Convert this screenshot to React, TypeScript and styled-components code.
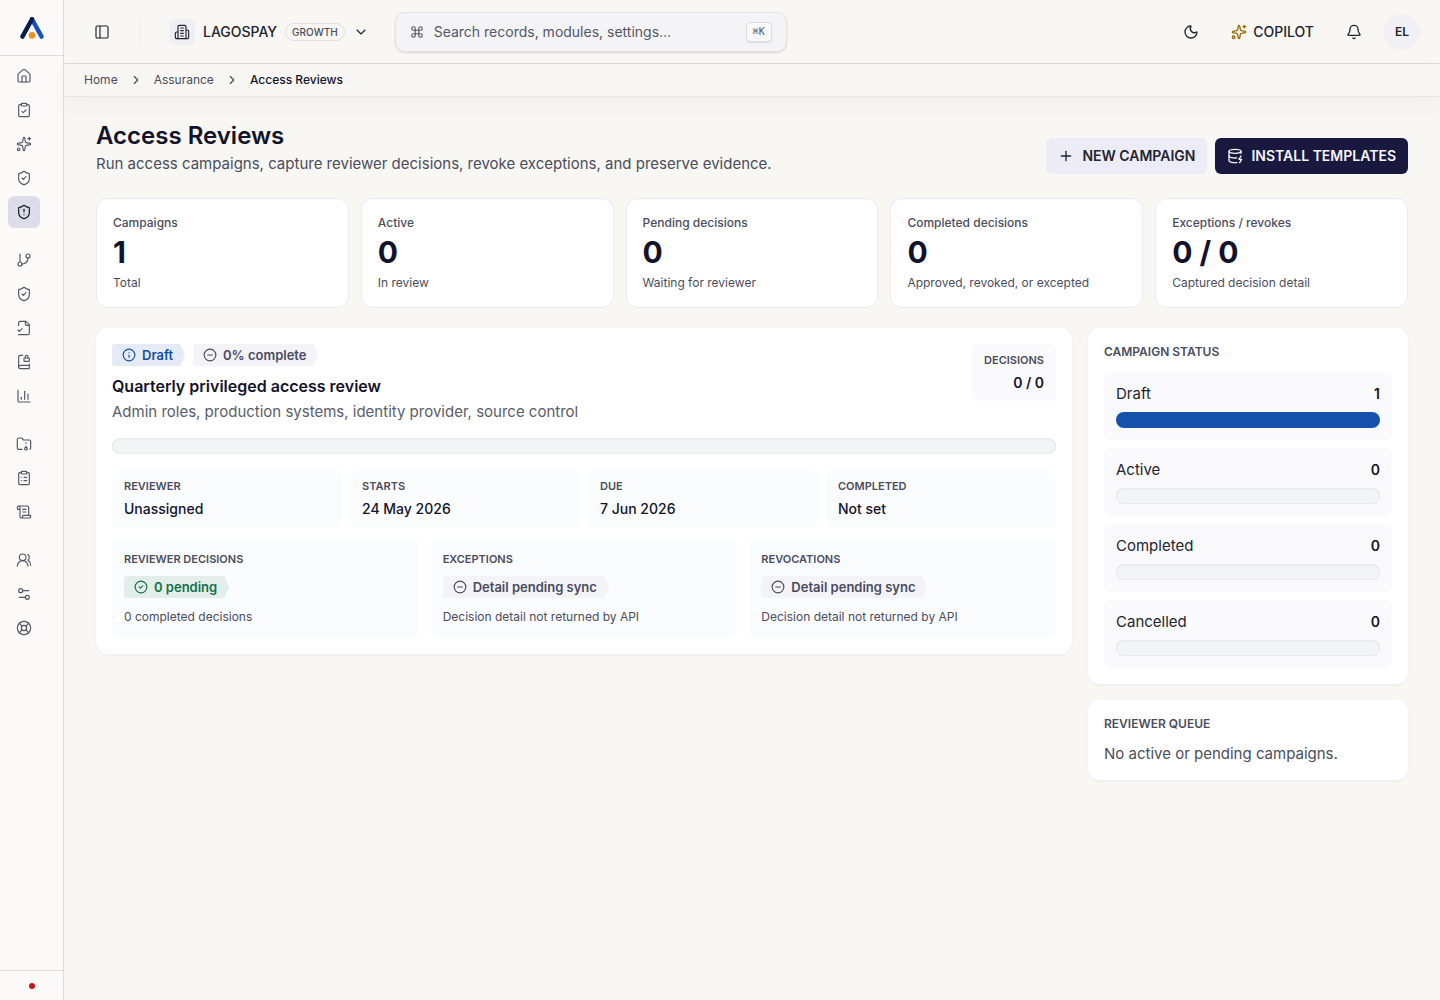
import React from "react";
import styled, { createGlobalStyle, css } from "styled-components";
import {
  Bell,
  BookLock,
  ChartColumn,
  ChevronDown,
  ChevronRight,
  CircleCheck,
  CircleMinus,
  ClipboardCheck,
  ClipboardList,
  Command,
  DatabaseZap,
  FolderArchive,
  House,
  Info,
  LifeBuoy,
  Moon,
  PanelLeft,
  Plus,
  ScrollText,
  Settings2,
  ShieldAlert,
  ShieldCheck,
  Sparkles,
  UsersRound,
} from "lucide-react";

const color = {
  page: "#f8f7f3",
  rail: "#fbfaf8",
  line: "#dddde1",
  ink: "#12132a",
  text: "#23242f",
  muted: "#4b4d5b",
  soft: "#eeeef5",
  navy: "#19193f",
  blue: "#1452ab",
};

const GlobalStyle = createGlobalStyle`
  *, *::before, *::after { box-sizing: border-box; }
  body {
    margin: 0;
    background: ${color.page};
    color: ${color.text};
    font-family: Inter, "Liberation Sans", sans-serif;
    font-size: 14px;
    line-height: 20px;
  }
  button, input { font: inherit; color: inherit; }
  h1, h2, h3, p, dl, dd, dt, ol, ul { margin: 0; padding: 0; }
  ol, ul { list-style: none; }
  svg { display: block; flex: none; }
`;

const Shell = styled.div`
  display: flex;
  min-height: 100vh;
`;

const Rail = styled.aside`
  display: flex;
  flex-direction: column;
  flex: none;
  width: 64px;
  background: ${color.rail};
  border-right: 1px solid ${color.line};
`;

const Brand = styled.a`
  display: flex;
  align-items: center;
  justify-content: center;
  height: 56px;
  border-bottom: 1px solid ${color.line};
`;

const RailNav = styled.nav`
  display: flex;
  flex-direction: column;
  flex: 1;
  gap: 16px;
  padding: 4px 8px;
`;

const RailGroup = styled.ul`
  display: flex;
  flex-direction: column;
  gap: 2px;
`;

const RailLink = styled.a<{ $active?: boolean }>`
  display: flex;
  align-items: center;
  justify-content: center;
  width: 32px;
  height: 32px;
  border-radius: 6px;
  color: ${(p) => (p.$active ? color.ink : "#555766")};
  background: ${(p) => (p.$active ? "#dcdde9" : "transparent")};
`;

const RailFoot = styled.div`
  display: flex;
  align-items: center;
  justify-content: center;
  height: 30px;
  border-top: 1px solid ${color.line};
`;

const StatusDot = styled.span`
  width: 6px;
  height: 6px;
  border-radius: 50%;
  background: #c4161c;
`;

const Body = styled.div`
  display: flex;
  flex-direction: column;
  flex: 1;
  min-width: 0;
`;

const TopBar = styled.header`
  display: flex;
  align-items: center;
  justify-content: space-between;
  height: 64px;
  padding: 0 20px;
  border-bottom: 1px solid ${color.line};
`;

const TopSide = styled.div`
  display: flex;
  align-items: center;
`;

const IconButton = styled.button`
  display: flex;
  align-items: center;
  justify-content: center;
  width: 36px;
  height: 36px;
  padding: 0;
  border: 0;
  background: none;
  cursor: pointer;
`;

const Divider = styled.span`
  width: 1px;
  height: 28px;
  margin: 0 20px;
  background: #ececec;
`;

const OrgButton = styled.button`
  display: flex;
  align-items: center;
  gap: 8px;
  height: 36px;
  padding: 0 8px;
  border: 0;
  background: none;
  font-size: 14px;
  font-weight: 500;
  cursor: pointer;
`;

const OrgMark = styled.span`
  display: flex;
  align-items: center;
  justify-content: center;
  width: 26px;
  height: 26px;
  border-radius: 6px;
  background: ${color.soft};
`;

const Plan = styled.span`
  padding: 0 6px;
  border: 1px solid #dfdfe4;
  border-radius: 9px;
  color: ${color.muted};
  font-size: 10px;
  line-height: 16px;
`;

const Search = styled.label`
  display: flex;
  align-items: center;
  gap: 10px;
  width: 392px;
  height: 40px;
  margin-left: 18px;
  padding: 0 14px;
  border: 1px solid #e3e3e6;
  border-radius: 10px;
  background: #f4f4f6;
  box-shadow: 0 1px 2px rgba(20, 20, 50, 0.14);
  color: #555766;
`;

const SearchInput = styled.input`
  flex: 1;
  min-width: 0;
  padding: 0;
  border: 0;
  outline: 0;
  background: none;
  font-size: 14px;
  &::placeholder { color: #555766; opacity: 1; }
`;

const Key = styled.kbd`
  padding: 0 6px;
  border: 1px solid #dcdce0;
  border-radius: 4px;
  background: #fafafa;
  box-shadow: 0 1px 1px rgba(20, 20, 50, 0.1);
  font-family: "DejaVu Sans Mono", monospace;
  font-size: 10px;
  line-height: 18px;
`;

const Copilot = styled.button`
  display: flex;
  align-items: center;
  gap: 6px;
  height: 36px;
  margin: 0 10px;
  padding: 0 12px;
  border: 0;
  background: none;
  font-size: 14px;
  font-weight: 500;
  cursor: pointer;
  svg { color: #9a6b0c; }
`;

const Avatar = styled.button`
  width: 36px;
  height: 36px;
  margin-left: 12px;
  padding: 0;
  border: 0;
  border-radius: 50%;
  background: #f0f0f5;
  font-size: 12px;
  font-weight: 600;
  cursor: pointer;
`;

const Crumbs = styled.nav`
  height: 33px;
  padding: 0 20px;
  border-bottom: 1px solid #e6e6e6;
  box-shadow: 0 8px 24px rgba(20, 20, 50, 0.04);
`;

const CrumbList = styled.ol`
  display: flex;
  align-items: center;
  height: 32px;
  color: ${color.muted};
  font-size: 12px;
  line-height: 16px;
`;

const Crumb = styled.li`
  display: flex;
  align-items: center;
  svg { margin: 0 11px; }
`;

const CrumbLink = styled.a`
  color: inherit;
  text-decoration: none;
`;

const CrumbHere = styled.span`
  color: ${color.ink};
  font-weight: 500;
`;

const Main = styled.main`
  display: flex;
  flex-direction: column;
  padding: 24px 32px;
`;

const PageHead = styled.div`
  display: flex;
  align-items: flex-end;
  justify-content: space-between;
  gap: 16px;
`;

const Title = styled.h1`
  color: ${color.ink};
  font-size: 24px;
  font-weight: 600;
  line-height: 29px;
`;

const Lead = styled.p`
  margin-top: 4px;
  color: ${color.muted};
  font-size: 15px;
  line-height: 20px;
`;

const Actions = styled.div`
  display: flex;
  gap: 8px;
`;

const Action = styled.button<{ $primary?: boolean }>`
  display: flex;
  align-items: center;
  gap: 8px;
  height: 36px;
  padding: 0 12px;
  border: 0;
  border-radius: 6px;
  background: ${(p) => (p.$primary ? color.navy : "#ebecf5")};
  color: ${(p) => (p.$primary ? "#f6f6fb" : color.text)};
  font-size: 14px;
  font-weight: 600;
  white-space: nowrap;
  cursor: pointer;
`;

const Stats = styled.dl`
  display: grid;
  grid-template-columns: repeat(5, minmax(0, 1fr));
  gap: 12px;
  margin-top: 24px;
`;

const Stat = styled.div`
  padding: 16px;
  border: 1px solid #ebebee;
  border-radius: 12px;
  background: #fff;
`;

const StatLabel = styled.dt`
  color: ${color.muted};
  font-size: 12px;
  font-weight: 500;
  line-height: 16px;
`;

const StatValue = styled.dd`
  margin: 3px 0 5px;
  color: ${color.ink};
  font-size: 30px;
  font-weight: 700;
  line-height: 36px;
`;

const StatNote = styled.dd`
  color: ${color.muted};
  font-size: 12px;
  line-height: 16px;
`;

const Columns = styled.div`
  display: grid;
  grid-template-columns: minmax(0, 1fr) 320px;
  align-items: start;
  gap: 16px;
  margin-top: 20px;
`;

const Side = styled.div`
  display: flex;
  flex-direction: column;
  gap: 16px;
`;

const Card = styled.section`
  padding: 16px;
  border-radius: 12px;
  background: #fff;
  box-shadow: 0 1px 3px rgba(20, 20, 50, 0.05);
`;

const CampaignHead = styled.div`
  display: flex;
  align-items: flex-start;
  justify-content: space-between;
`;

const Badges = styled.div`
  display: flex;
  gap: 8px;
`;

type Tone = "info" | "neutral" | "good";
const tones = {
  info: css`background: #e5ebf6; color: #14509f;`,
  neutral: css`background: #f3f3f8; color: #4a4b5e;`,
  good: css`background: #e3eeea; color: #12704a;`,
};

const BadgeBox = styled.span<{ $tone: Tone }>`
  display: inline-flex;
  align-items: center;
  gap: 6px;
  height: 22px;
  padding: 0 12px 0 10px;
  border-radius: 3px 0 0 3px;
  clip-path: polygon(0 0, calc(100% - 5px) 0, 100% 50%, calc(100% - 5px) 100%, 0 100%);
  font-size: 13px;
  font-weight: 600;
  line-height: 16px;
  ${(p) => tones[p.$tone]}
`;

const CampaignName = styled.h2`
  margin-top: 8px;
  color: ${color.ink};
  font-size: 16px;
  font-weight: 600;
  line-height: 24px;
`;

const CampaignScope = styled.p`
  margin-top: 4px;
  color: #5b5d69;
  font-size: 15px;
  line-height: 20px;
`;

const Track = styled.div`
  overflow: hidden;
  height: 16px;
  border-radius: 8px;
  background: #f3f4f6;
  box-shadow: inset 0 0 0 1px #e9eaed, inset 0 1px 2px rgba(20, 20, 50, 0.08);
`;

const Fill = styled.div`
  height: 100%;
  background: ${color.blue};
`;

const CampaignTrack = styled.div`
  margin-top: 16px;
`;

const Tiles = styled.div<{ $count: number; $gap: number; $top: number }>`
  display: grid;
  grid-template-columns: repeat(${(p) => p.$count}, minmax(0, 1fr));
  gap: ${(p) => p.$gap}px;
  margin-top: ${(p) => p.$top}px;
`;

const Fact = styled.div<{ $end?: boolean }>`
  padding: 8px 12px;
  border-radius: 6px;
  background: ${(p) => (p.$end ? "#fafafc" : "#fbfcfd")};
  text-align: ${(p) => (p.$end ? "right" : "left")};
`;

const Overline = styled.h3`
  color: ${color.muted};
  font-size: 11px;
  font-weight: 600;
  line-height: 16px;
  text-transform: uppercase;
`;

const FactValue = styled.p`
  margin-top: 4px;
  color: ${color.ink};
  font-size: 14px;
  font-weight: 500;
  line-height: 21px;
`;

const Strong = styled(FactValue)`
  font-weight: 600;
`;

const Outcome = styled.div`
  display: flex;
  flex-direction: column;
  align-items: flex-start;
  padding: 12px;
  border-radius: 6px;
  background: #fbfcfd;
`;

const OutcomeBadge = styled.div`
  display: flex;
  margin: 9px 0 10px;
`;

const Note = styled.p`
  color: ${color.muted};
  font-size: 12px;
  line-height: 18px;
`;

const SideTitle = styled.h2`
  color: ${color.muted};
  font-size: 12px;
  font-weight: 600;
  line-height: 16px;
  text-transform: uppercase;
`;

const StatusList = styled.ul`
  display: flex;
  flex-direction: column;
  gap: 8px;
  margin-top: 12px;
`;

const StatusItem = styled.li`
  padding: 12px;
  border-radius: 6px;
  background: #fafafc;
`;

const StatusRow = styled.div`
  display: flex;
  justify-content: space-between;
  margin-bottom: 8px;
`;

const StatusName = styled.span`
  font-size: 15px;
`;

const Count = styled.span`
  color: ${color.ink};
  font-weight: 600;
`;

const Empty = styled.p`
  margin-top: 12px;
  color: ${color.muted};
  font-size: 15px;
  line-height: 20px;
`;

type IconProps = { size?: number; strokeWidth?: number };

function Glyph({ size = 16, strokeWidth = 2, children }: IconProps & { children: React.ReactNode }) {
  return (
    <svg
      width={size}
      height={size}
      viewBox="0 0 24 24"
      fill="none"
      stroke="currentColor"
      strokeWidth={strokeWidth}
      strokeLinecap="round"
      strokeLinejoin="round"
      aria-hidden="true"
    >
      {children}
    </svg>
  );
}

const BranchIcon = (p: IconProps) => (
  <Glyph {...p}>
    <path d="M6 3v12" />
    <circle cx="18" cy="6" r="3" />
    <circle cx="6" cy="18" r="3" />
    <path d="M18 9a9 9 0 0 1-9 9" />
  </Glyph>
);

const FileTickIcon = (p: IconProps) => (
  <Glyph {...p}>
    <path d="M4 22h14a2 2 0 0 0 2-2V7l-5-5H6a2 2 0 0 0-2 2v4" />
    <path d="M14 2v4a2 2 0 0 0 2 2h4" />
    <path d="m3 15 2 2 4-4" />
  </Glyph>
);

const BuildingIcon = (p: IconProps) => (
  <Glyph {...p}>
    <path d="M6 22V4a2 2 0 0 1 2-2h8a2 2 0 0 1 2 2v18Z" />
    <path d="M6 12H4a2 2 0 0 0-2 2v6a2 2 0 0 0 2 2h2" />
    <path d="M18 9h2a2 2 0 0 1 2 2v9a2 2 0 0 1-2 2h-2" />
    <path d="M10 6h4M10 10h4M10 14h4M10 18h4" />
  </Glyph>
);

const Logo = () => (
  <svg width="26" height="24" viewBox="0 0 26 24" fill="none" strokeLinecap="round" strokeLinejoin="round" aria-hidden="true">
    <path d="M13 3.2 22.6 20.6" stroke="#1552c0" strokeWidth="4.4" />
    <path d="M3.4 20.6 13 3.2" stroke="#0b1d4d" strokeWidth="4.4" />
    <circle cx="13" cy="19.4" r="3.3" fill="#e8951f" />
  </svg>
);

const railGroups = [
  [
    { label: "Home", icon: House },
    { label: "Tasks", icon: ClipboardCheck },
    { label: "Copilot", icon: Sparkles },
    { label: "Compliance", icon: ShieldCheck },
    { label: "Assurance", icon: ShieldAlert, active: true },
  ],
  [
    { label: "Workflows", icon: BranchIcon },
    { label: "Controls", icon: ShieldCheck },
    { label: "Policies", icon: FileTickIcon },
    { label: "Registers", icon: BookLock },
    { label: "Reports", icon: ChartColumn },
  ],
  [
    { label: "Evidence", icon: FolderArchive },
    { label: "Audits", icon: ClipboardList },
    { label: "Logs", icon: ScrollText },
  ],
  [
    { label: "People", icon: UsersRound },
    { label: "Settings", icon: Settings2 },
    { label: "Help", icon: LifeBuoy },
  ],
];

const stats = [
  { label: "Campaigns", value: "1", note: "Total" },
  { label: "Active", value: "0", note: "In review" },
  { label: "Pending decisions", value: "0", note: "Waiting for reviewer" },
  { label: "Completed decisions", value: "0", note: "Approved, revoked, or excepted" },
  { label: "Exceptions / revokes", value: "0 / 0", note: "Captured decision detail" },
];

const facts = [
  { label: "Reviewer", value: "Unassigned" },
  { label: "Starts", value: "24 May 2026" },
  { label: "Due", value: "7 Jun 2026" },
  { label: "Completed", value: "Not set" },
];

const outcomes: { label: string; tone: Tone; badge: string; note: string }[] = [
  { label: "Reviewer decisions", tone: "good", badge: "0 pending", note: "0 completed decisions" },
  { label: "Exceptions", tone: "neutral", badge: "Detail pending sync", note: "Decision detail not returned by API" },
  { label: "Revocations", tone: "neutral", badge: "Detail pending sync", note: "Decision detail not returned by API" },
];

const statuses = [
  { label: "Draft", count: 1 },
  { label: "Active", count: 0 },
  { label: "Completed", count: 0 },
  { label: "Cancelled", count: 0 },
];

const badgeIcons = { info: Info, neutral: CircleMinus, good: CircleCheck };

function Badge({ tone, children }: { tone: Tone; children: React.ReactNode }) {
  const Icon = badgeIcons[tone];
  return (
    <BadgeBox $tone={tone}>
      <Icon size={14} />
      {children}
    </BadgeBox>
  );
}

function Progress({ label, value }: { label: string; value: number }) {
  return (
    <Track role="progressbar" aria-label={label} aria-valuenow={value} aria-valuemin={0} aria-valuemax={100}>
      <Fill style={{ width: `${value}%` }} />
    </Track>
  );
}

export default function App() {
  const total = statuses.reduce((sum, s) => sum + s.count, 0);
  return (
    <>
      <GlobalStyle />
      <Shell>
        <Rail>
          <Brand href="#" aria-label="Dashboard">
            <Logo />
          </Brand>
          <RailNav aria-label="Modules">
            {railGroups.map((group, i) => (
              <RailGroup key={i}>
                {group.map(({ label, icon: Icon, active }: any) => (
                  <li key={label}>
                    <RailLink href="#" aria-label={label} $active={active}>
                      <Icon size={16} strokeWidth={1.75} />
                    </RailLink>
                  </li>
                ))}
              </RailGroup>
            ))}
          </RailNav>
          <RailFoot>
            <StatusDot />
          </RailFoot>
        </Rail>

        <Body>
          <TopBar>
            <TopSide>
              <IconButton aria-label="Toggle sidebar">
                <PanelLeft size={16} strokeWidth={1.75} />
              </IconButton>
              <Divider />
              <OrgButton>
                <OrgMark>
                  <BuildingIcon size={16} strokeWidth={1.75} />
                </OrgMark>
                LAGOSPAY
                <Plan>GROWTH</Plan>
                <ChevronDown size={16} strokeWidth={1.75} />
              </OrgButton>
              <Search>
                <Command size={14} />
                <SearchInput type="text" aria-label="Search" placeholder="Search records, modules, settings…" />
                <Key>⌘K</Key>
              </Search>
            </TopSide>
            <TopSide>
              <IconButton aria-label="Dark mode">
                <Moon size={16} />
              </IconButton>
              <Copilot>
                <Sparkles size={16} />
                COPILOT
              </Copilot>
              <IconButton aria-label="Notifications">
                <Bell size={16} />
              </IconButton>
              <Avatar>EL</Avatar>
            </TopSide>
          </TopBar>

          <Crumbs aria-label="Breadcrumb">
            <CrumbList>
              <Crumb>
                <CrumbLink href="#">Home</CrumbLink>
                <ChevronRight size={14} />
              </Crumb>
              <Crumb>
                <CrumbLink href="#">Assurance</CrumbLink>
                <ChevronRight size={14} />
              </Crumb>
              <Crumb>
                <CrumbHere aria-current="page">Access Reviews</CrumbHere>
              </Crumb>
            </CrumbList>
          </Crumbs>

          <Main>
            <PageHead>
              <div>
                <Title>Access Reviews</Title>
                <Lead>Run access campaigns, capture reviewer decisions, revoke exceptions, and preserve evidence.</Lead>
              </div>
              <Actions>
                <Action>
                  <Plus size={16} />
                  NEW CAMPAIGN
                </Action>
                <Action $primary>
                  <DatabaseZap size={16} />
                  INSTALL TEMPLATES
                </Action>
              </Actions>
            </PageHead>

            <Stats>
              {stats.map((s) => (
                <Stat key={s.label}>
                  <StatLabel>{s.label}</StatLabel>
                  <StatValue>{s.value}</StatValue>
                  <StatNote>{s.note}</StatNote>
                </Stat>
              ))}
            </Stats>

            <Columns>
              <Card>
                <CampaignHead>
                  <div>
                    <Badges>
                      <Badge tone="info">Draft</Badge>
                      <Badge tone="neutral">0% complete</Badge>
                    </Badges>
                    <CampaignName>Quarterly privileged access review</CampaignName>
                    <CampaignScope>Admin roles, production systems, identity provider, source control</CampaignScope>
                  </div>
                  <Fact $end>
                    <Overline>Decisions</Overline>
                    <Strong>0 / 0</Strong>
                  </Fact>
                </CampaignHead>
                <CampaignTrack>
                  <Progress label="Campaign progress" value={0} />
                </CampaignTrack>
                <Tiles $count={4} $gap={8} $top={16}>
                  {facts.map((f) => (
                    <Fact key={f.label}>
                      <Overline>{f.label}</Overline>
                      <FactValue>{f.value}</FactValue>
                    </Fact>
                  ))}
                </Tiles>
                <Tiles $count={3} $gap={12} $top={12}>
                  {outcomes.map((o) => (
                    <Outcome key={o.label}>
                      <Overline>{o.label}</Overline>
                      <OutcomeBadge>
                        <Badge tone={o.tone}>{o.badge}</Badge>
                      </OutcomeBadge>
                      <Note>{o.note}</Note>
                    </Outcome>
                  ))}
                </Tiles>
              </Card>

              <Side>
                <Card>
                  <SideTitle>Campaign status</SideTitle>
                  <StatusList>
                    {statuses.map((s) => (
                      <StatusItem key={s.label}>
                        <StatusRow>
                          <StatusName>{s.label}</StatusName>
                          <Count>{s.count}</Count>
                        </StatusRow>
                        <Progress label={s.label} value={(s.count / total) * 100} />
                      </StatusItem>
                    ))}
                  </StatusList>
                </Card>
                <Card>
                  <SideTitle>Reviewer queue</SideTitle>
                  <Empty>No active or pending campaigns.</Empty>
                </Card>
              </Side>
            </Columns>
          </Main>
        </Body>
      </Shell>
    </>
  );
}
